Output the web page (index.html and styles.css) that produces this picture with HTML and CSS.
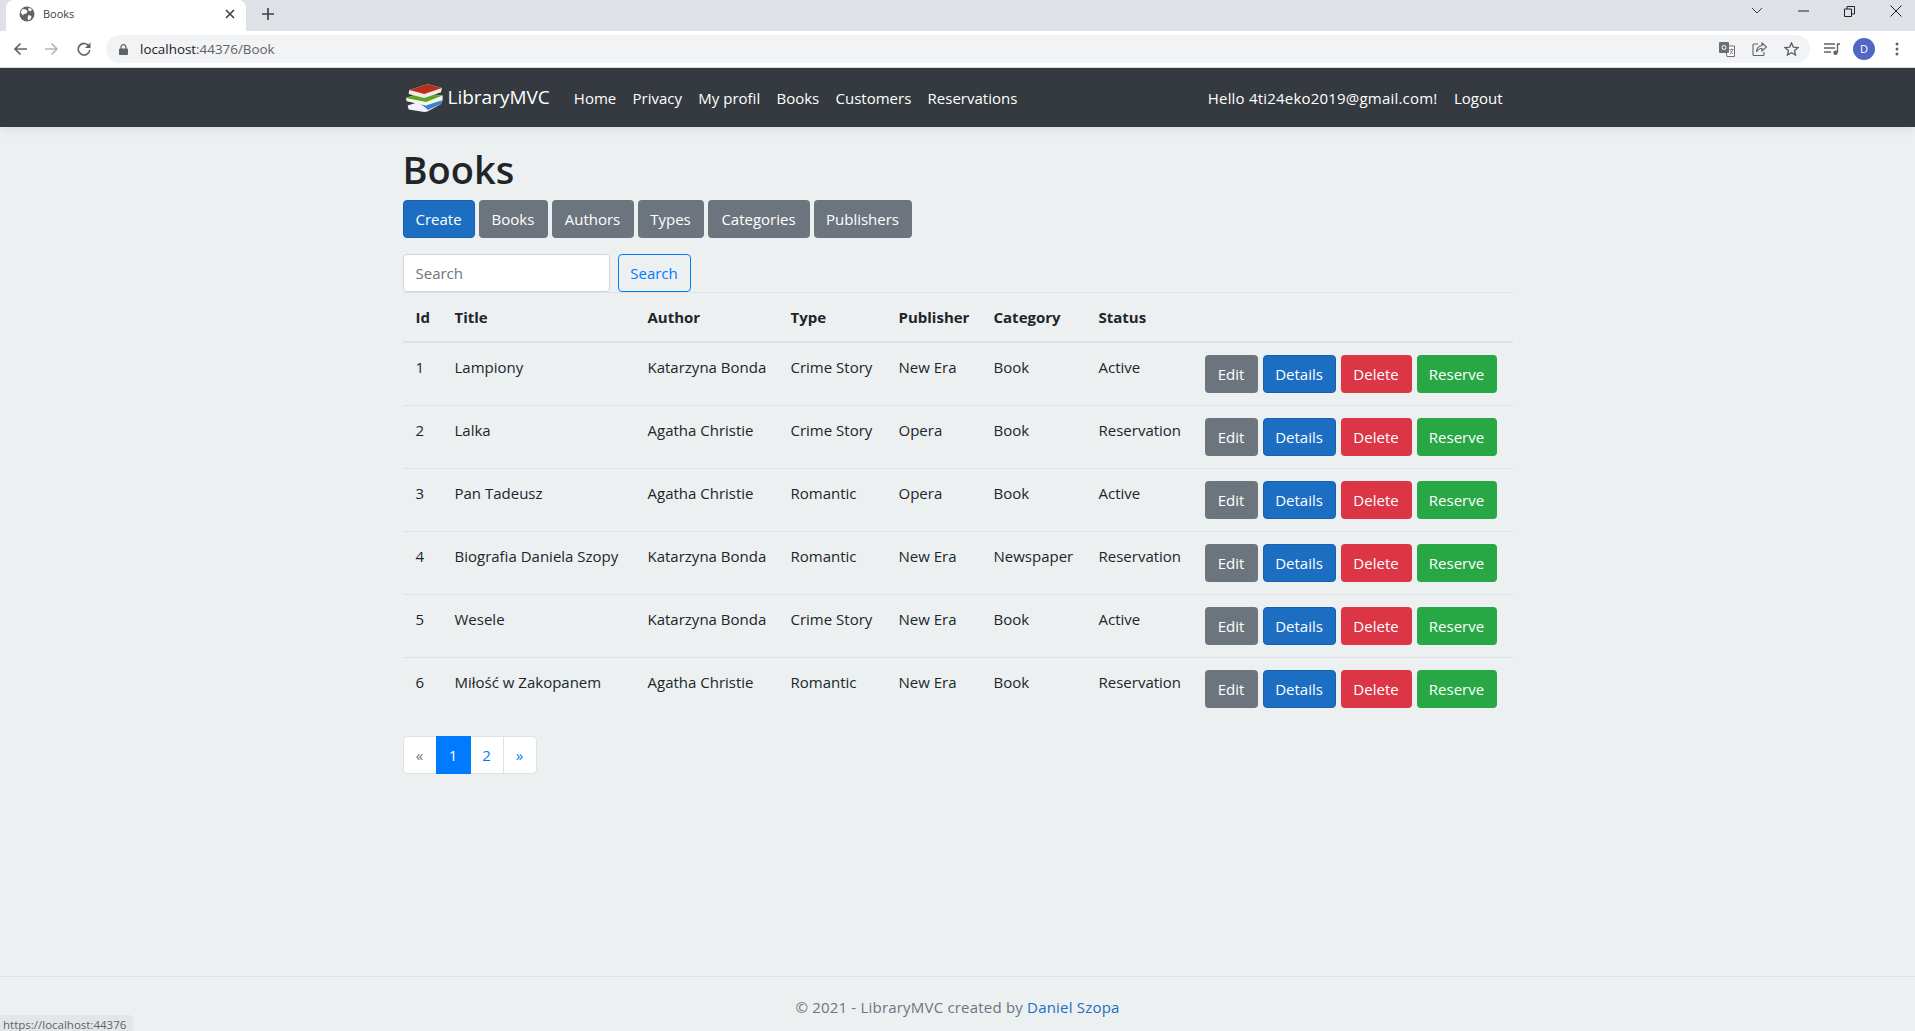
FILE: index.html
```html
<!DOCTYPE html>
<html lang="en">
<head>
    <meta charset="UTF-8">
    <title>Books</title>
    <link rel="stylesheet" href="styles.css">
</head>
<body>
    <div class="tabstrip">
        <div class="tab">
            <svg class="tab-globe" width="16" height="16" viewBox="0 0 16 16"><circle cx="8" cy="8" r="7.500" fill="#5f6368"/><path d="M3.500 3l3.500.5 1.500 1.500-1 2.500-2.500.5-1 1.500-2.500-3zM9.500 9l3 1-.5 2.500-2.500 2-1-2.500zM10 1.500l3 2-1.500 2-2.500-1.500z" fill="#fff"/></svg>
            <span class="tab-title">Books</span>
            <svg class="tab-close" width="10" height="10" viewBox="0 0 10 10"><path d="M1 1l8 8M9 1l-8 8" stroke="#3c4043" stroke-width="1.600"/></svg>
        </div>
        <svg class="tab-new" width="12" height="12" viewBox="0 0 12 12"><path d="M6 0v12M0 6h12" stroke="#3c4043" stroke-width="1.600"/></svg>
        <div class="window-buttons">
            <svg width="12" height="8" viewBox="0 0 12 8"><path d="M1 1l5 5 5-5" fill="none" stroke="#3c4043" stroke-width="1"/></svg>
            <svg width="11" height="2" viewBox="0 0 11 2"><path d="M0 1h11" stroke="#202124" stroke-width="1"/></svg>
            <svg width="11" height="11" viewBox="0 0 11 11"><path d="M.5 3h7v7.500h-7zM3 3V.5h7.500V8H8" fill="none" stroke="#202124" stroke-width="1"/></svg>
            <svg width="12" height="12" viewBox="0 0 12 12"><path d="M.5.500l11 11M11.500.500l-11 11" stroke="#202124" stroke-width="1"/></svg>
        </div>
    </div>
    <div class="toolbar">
        <svg class="nav-icon" width="14" height="14" viewBox="0 0 14 14"><path d="M14 7H2M7.500 1.500L2 7l5.500 5.500" fill="none" stroke="#5f6368" stroke-width="1.700"/></svg>
        <svg class="nav-icon" width="14" height="14" viewBox="0 0 14 14"><path d="M0 7h12M6.500 1.500L12 7l-5.500 5.500" fill="none" stroke="#b4b7bb" stroke-width="1.700"/></svg>
        <svg class="nav-icon" width="14" height="14" viewBox="0 0 14 14"><path d="M12 4.200A5.800 5.800 0 1 0 12.800 8" fill="none" stroke="#5f6368" stroke-width="1.600"/><path d="M13.500 .5v5.500H8z" fill="#5f6368"/></svg>
        <div class="omnibox">
            <svg width="9" height="11" viewBox="0 0 9 11"><path d="M2 5V3.200a2.500 2.500 0 0 1 5 0V5" fill="none" stroke="#5f6368" stroke-width="1.200"/><rect y="4.500" width="9" height="6.500" rx="1" fill="#5f6368"/></svg>
            <span class="url"><b>localhost</b>:44376/Book</span>
            <span class="omni-icons">
                <svg width="16" height="15" viewBox="0 0 16 15"><path d="M6 4h9.500v10.500H8z" fill="#fff" stroke="#6b6f74"/><rect width="10" height="11" rx="1" fill="#6b6f74"/><circle cx="5" cy="5.500" r="2" fill="none" stroke="#fff"/><path d="M10.500 7.500h4M12.500 6.500v1M11 12.500l3-5M11 8.500l3 3.500" fill="none" stroke="#6b6f74" stroke-width=".8"/></svg>
                <svg width="15" height="15" viewBox="0 0 15 15"><path d="M6 2H2a1 1 0 0 0-1 1v9.500a1 1 0 0 0 1 1h9a1 1 0 0 0 1-1V10" fill="none" stroke="#5f6368" stroke-width="1.100"/><path d="M10 1l4.500 4L10 9V6.500C7.500 6.500 5.500 7.500 4.500 10c0-3.500 2-6 5.500-6.500z" fill="none" stroke="#5f6368" stroke-width="1.100"/></svg>
                <svg width="15" height="14" viewBox="0 0 15 14"><path d="M7.500 1l1.900 4.100 4.600.5-3.400 3 .9 4.400-4-2.300-4 2.300.9-4.400L1 5.600l4.600-.5z" fill="none" stroke="#5f6368" stroke-width="1.400"/></svg>
            </span>
        </div>
        <svg class="media-icon" width="16" height="12" viewBox="0 0 16 12"><path d="M0 1h11M0 5h11M0 9h7" stroke="#5f6368" stroke-width="1.400"/><path d="M13 1h3M13.500 1v8.500" stroke="#5f6368" stroke-width="1.400"/><circle cx="11.500" cy="9.700" r="2.200" fill="#5f6368"/></svg>
        <span class="avatar">D</span>
        <svg class="menu-icon" width="4" height="14" viewBox="0 0 4 14"><circle cx="2" cy="2" r="1.500" fill="#5f6368"/><circle cx="2" cy="7" r="1.500" fill="#5f6368"/><circle cx="2" cy="12" r="1.500" fill="#5f6368"/></svg>
    </div>

    <div class="page">
        <nav class="navbar">
            <div class="nav-inner">
                <a class="brand">
                    <svg width="37" height="28" viewBox="0 0 37 28">
                        <path d="M1.600 21.600L25 14l11.600 2.600L35 20l-13.500 7.500-3.200.5-15.700-2.400z" fill="#f1f0fb"/>
                        <path d="M14 19.500L36.600 16.600 35 20l-13.400 6-1-1.500z" fill="#3f7fd0"/>
                        <path d="M0 14l14-5 22.600 2.600V16L20 21.600 .6 17.300z" fill="#f4f6ec"/>
                        <path d="M0 14l13.300-4.500 23.300 2.100L20 18z" fill="#5da32a"/>
                        <path d="M3.300 6L21.600 0 36 4l-1 4.300L18.300 14 2.600 10z" fill="#f5ebe6"/>
                        <path d="M3.300 6L21.600 0 36 4 18.300 10z" fill="#b8301c"/>
                    </svg>
                    <span>LibraryMVC</span>
                </a>
                <ul class="nav-links">
                    <li>Home</li>
                    <li>Privacy</li>
                    <li>My profil</li>
                    <li>Books</li>
                    <li>Customers</li>
                    <li>Reservations</li>
                </ul>
                <div class="nav-user">
                    <span class="hello">Hello 4ti24eko2019@gmail.com!</span>
                    <span class="logout">Logout</span>
                </div>
            </div>
        </nav>

        <main class="content">
            <h1>Books</h1>
            <div class="section-buttons">
                <a class="btn btn-blue w-create">Create</a>
                <a class="btn btn-gray w-books">Books</a>
                <a class="btn btn-gray w-authors">Authors</a>
                <a class="btn btn-gray w-types">Types</a>
                <a class="btn btn-gray w-categories">Categories</a>
                <a class="btn btn-gray w-publishers">Publishers</a>
            </div>
            <form class="search">
                <input type="text" placeholder="Search">
                <button type="button" class="btn btn-outline">Search</button>
            </form>

            <table class="books">
                <colgroup>
                    <col class="c-id"><col class="c-title"><col class="c-author"><col class="c-type"><col class="c-publisher"><col class="c-category"><col class="c-status"><col>
                </colgroup>
                <thead>
                    <tr><th>Id</th><th>Title</th><th>Author</th><th>Type</th><th>Publisher</th><th>Category</th><th>Status</th><th></th></tr>
                </thead>
                <tbody>
                    <tr>
                        <td>1</td><td>Lampiony</td><td>Katarzyna Bonda</td><td>Crime Story</td><td>New Era</td><td>Book</td><td>Active</td>
                        <td class="actions"><div class="action-row"><a class="btn btn-gray">Edit</a><a class="btn btn-blue">Details</a><a class="btn btn-red">Delete</a><a class="btn btn-green">Reserve</a></div></td>
                    </tr>
                    <tr>
                        <td>2</td><td>Lalka</td><td>Agatha Christie</td><td>Crime Story</td><td>Opera</td><td>Book</td><td>Reservation</td>
                        <td class="actions"><div class="action-row"><a class="btn btn-gray">Edit</a><a class="btn btn-blue">Details</a><a class="btn btn-red">Delete</a><a class="btn btn-green">Reserve</a></div></td>
                    </tr>
                    <tr>
                        <td>3</td><td>Pan Tadeusz</td><td>Agatha Christie</td><td>Romantic</td><td>Opera</td><td>Book</td><td>Active</td>
                        <td class="actions"><div class="action-row"><a class="btn btn-gray">Edit</a><a class="btn btn-blue">Details</a><a class="btn btn-red">Delete</a><a class="btn btn-green">Reserve</a></div></td>
                    </tr>
                    <tr>
                        <td>4</td><td>Biografia Daniela Szopy</td><td>Katarzyna Bonda</td><td>Romantic</td><td>New Era</td><td>Newspaper</td><td>Reservation</td>
                        <td class="actions"><div class="action-row"><a class="btn btn-gray">Edit</a><a class="btn btn-blue">Details</a><a class="btn btn-red">Delete</a><a class="btn btn-green">Reserve</a></div></td>
                    </tr>
                    <tr>
                        <td>5</td><td>Wesele</td><td>Katarzyna Bonda</td><td>Crime Story</td><td>New Era</td><td>Book</td><td>Active</td>
                        <td class="actions"><div class="action-row"><a class="btn btn-gray">Edit</a><a class="btn btn-blue">Details</a><a class="btn btn-red">Delete</a><a class="btn btn-green">Reserve</a></div></td>
                    </tr>
                    <tr>
                        <td>6</td><td>Miłość w Zakopanem</td><td>Agatha Christie</td><td>Romantic</td><td>New Era</td><td>Book</td><td>Reservation</td>
                        <td class="actions"><div class="action-row"><a class="btn btn-gray">Edit</a><a class="btn btn-blue">Details</a><a class="btn btn-red">Delete</a><a class="btn btn-green">Reserve</a></div></td>
                    </tr>
                </tbody>
            </table>

            <ul class="pagination">
                <li class="muted">«</li>
                <li class="current">1</li>
                <li class="after-current">2</li>
                <li>»</li>
            </ul>
        </main>

        <footer class="footer">
            © 2021 - LibraryMVC created by <a>Daniel Szopa</a>
        </footer>
    </div>
    <div class="status-bubble">https://localhost:44376</div>
</body>
</html>
```

FILE: styles.css
```css
* {
    box-sizing: border-box;
}

html, body {
    height: 100%;
}

body {
    margin: 0;
    font-family: "Open Sans", "Noto Sans", sans-serif;
    font-size: 15px;
    line-height: 24px;
    color: #212529;
    background-color: #ecf0f1;
    display: flex;
    flex-direction: column;
    overflow: hidden;
}

/* browser chrome */
.tabstrip {
    height: 31px;
    background-color: #dee1e6;
    display: flex;
    align-items: flex-start;
    flex-shrink: 0;
}

.tab {
    width: 240px;
    height: 31px;
    margin-left: 6px;
    padding: 0 11px 3px 13px;
    background-color: #fff;
    border-radius: 8px 8px 0 0;
    display: flex;
    align-items: center;
}

.tab-title {
    margin-left: 8px;
    flex: 1;
    font-size: 11px;
    color: #3c4043;
}

.tab-new {
    margin: 8px 0 0 16px;
}

.window-buttons {
    margin-left: auto;
    height: 22px;
    display: flex;
    align-items: center;
    gap: 35px;
    padding-right: 13px;
}

.toolbar {
    height: 37px;
    background-color: #fff;
    border-bottom: 1px solid #dadce0;
    display: flex;
    align-items: center;
    flex-shrink: 0;
    padding-left: 13px;
}

.nav-icon {
    margin-right: 18px;
}

.nav-icon:nth-child(3) {
    margin-right: 15px;
}

.omnibox {
    flex: 1;
    height: 28px;
    margin-right: 14px;
    padding: 0 11px 0 13px;
    border-radius: 14px;
    background-color: #f1f3f4;
    display: flex;
    align-items: center;
}

.url {
    margin-left: 12px;
    font-size: 13.400px;
    color: #5f6368;
}

.url b {
    font-weight: normal;
    color: #202124;
}

.omni-icons {
    margin-left: auto;
    display: flex;
    align-items: center;
    gap: 17px;
}

.media-icon {
    margin-right: 13px;
}

.avatar {
    width: 22px;
    height: 22px;
    border-radius: 50%;
    background-color: #5266c4;
    color: #fff;
    font-size: 11px;
    line-height: 22px;
    text-align: center;
}

.menu-icon {
    margin-left: 20px;
    margin-right: 16px;
}

/* site */
.page {
    flex: 1;
    display: flex;
    flex-direction: column;
    min-height: 0;
}

.navbar {
    height: 59px;
    background-color: #343a40;
    box-shadow: 0 4px 8px rgba(0, 0, 0, 0.06);
    color: #fff;
    flex-shrink: 0;
}

.nav-inner {
    width: 1110px;
    height: 100%;
    margin: 0 auto;
    display: flex;
    align-items: center;
}

.brand {
    display: flex;
    align-items: center;
    font-size: 19px;
    margin-left: 3px;
}

.brand span {
    margin-left: 5px;
    margin-top: -1px;
}

.nav-links {
    list-style: none;
    margin: 0 0 0 24px;
    padding: 0;
    display: flex;
    gap: 16.300px;
}

.nav-user {
    margin-left: auto;
    margin-right: 10px;
    display: flex;
    gap: 16.500px;
}

.hello {
    letter-spacing: 0.2px;
}

.content {
    width: 1110px;
    margin: 0 auto;
    flex: 1;
}

h1 {
    margin: 18px 0 7px;
    font-size: 38px;
    font-weight: 600;
    line-height: 48px;
}

.section-buttons {
    display: flex;
    gap: 4px;
}

.btn {
    display: inline-flex;
    align-items: center;
    justify-content: center;
    height: 38px;
    padding: 0 12px;
    border: 1px solid transparent;
    border-radius: 4px;
    font-family: inherit;
    font-size: 15px;
    color: #fff;
    background: none;
}

.btn-blue {
    background-color: #1b6ec2;
    border-color: #1861ac;
}

.btn-gray {
    background-color: #6c757d;
}

.btn-red {
    background-color: #dc3545;
}

.btn-green {
    background-color: #28a745;
}

.btn-outline {
    color: #007bff;
    border-color: #007bff;
}

.w-create { width: 72px; }
.w-books { width: 69px; }
.w-authors { width: 82px; }
.w-types { width: 66px; }
.w-categories { width: 102px; }
.w-publishers { width: 98px; }

.search {
    margin: 16px 0 0;
    display: flex;
    gap: 8px;
}

.search input {
    width: 207px;
    height: 38px;
    padding: 0 12px;
    border: 1px solid #ced4da;
    border-radius: 4px;
    font-family: inherit;
    font-size: 15px;
    background-color: #fff;
}

.search input::placeholder {
    color: #6c757d;
}

.search .btn {
    width: 73px;
}

.books {
    width: 100%;
    table-layout: fixed;
    border-collapse: collapse;
}

.books th,
.books td {
    padding: 12px 12px 12px 13px;
    text-align: left;
    vertical-align: top;
    border-top: 1px solid #dee2e6;
    white-space: nowrap;
}

.books th {
    font-weight: 700;
    border-bottom: 2px solid #dee2e6;
}

.c-id { width: 39px; }
.c-title { width: 193px; }
.c-author { width: 143px; }
.c-type { width: 108px; }
.c-publisher { width: 95px; }
.c-category { width: 105px; }
.c-status { width: 107px; }

.books td.actions {
    padding-left: 12px;
}

.action-row {
    display: flex;
    gap: 5px;
}

.actions .btn:nth-child(1) { width: 53px; }
.actions .btn:nth-child(2) { width: 73px; }
.actions .btn:nth-child(3) { width: 71px; }
.actions .btn:nth-child(4) { width: 80px; }

.pagination {
    list-style: none;
    margin: 16px 0 0;
    padding: 0;
    display: flex;
    width: 134px;
    height: 38px;
    color: #007bff;
    background-color: #fff;
    border: 1px solid #dee2e6;
    border-radius: 4px;
}

.pagination li {
    flex: 1;
    text-align: center;
    line-height: 36px;
    border-left: 1px solid #dee2e6;
    font-size: 15px;
}

.pagination li:first-child,
.pagination .after-current {
    border-left: none;
}

.pagination .muted {
    color: #6c757d;
}

.pagination .current {
    flex: 0 0 35px;
    margin: -1px 0;
    line-height: 38px;
    color: #fff;
    background-color: #007bff;
    border-left: none;
}

.footer {
    height: 55px;
    border-top: 1px solid #dee2e6;
    padding-top: 18px;
    text-align: center;
    color: #6c757d;
    letter-spacing: 0.2px;
    flex-shrink: 0;
}

.footer a {
    color: #1b6ec2;
}

/* link preview, sits over the footer */
.status-bubble {
    position: absolute;
    left: 0;
    bottom: 0;
    height: 16px;
    width: 133px;
    padding-left: 3px;
    font-size: 11.500px;
    line-height: 20px;
    color: #5f6368;
    background-color: #e3e6e8;
    border-radius: 0 4px 0 0;
    overflow: hidden;
}
```
